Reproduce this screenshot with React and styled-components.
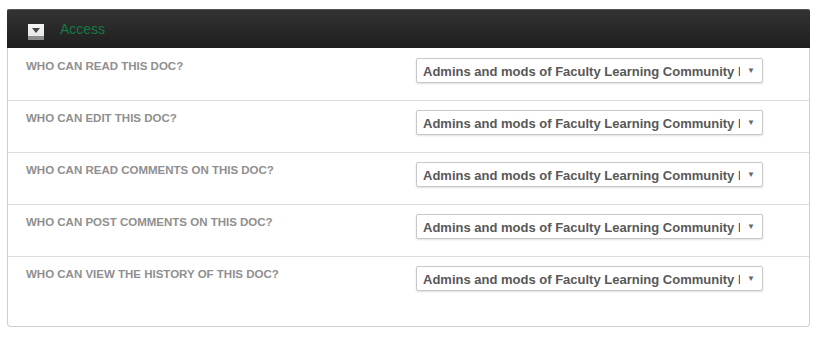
import React from "react";
import styled, { createGlobalStyle } from "styled-components";

const GlobalStyle = createGlobalStyle`
  body {
    margin: 0;
    background: #fff;
    font-family: "Liberation Sans", Arial, sans-serif;
  }
`;

const rules = [
  "Who can read this doc?",
  "Who can edit this doc?",
  "Who can read comments on this doc?",
  "Who can post comments on this doc?",
  "Who can view the history of this doc?",
];

const App = () => (
  <>
    <GlobalStyle />
    <Panel>
      <Header>
        <Toggle>
          <svg width="8" height="5" viewBox="0 0 8 5">
            <polygon points="0,0 8,0 4,5" fill="#444" />
          </svg>
        </Toggle>
        <Title>Access</Title>
      </Header>
      {rules.map((rule, i) => (
        <Row key={rule} last={i === rules.length - 1}>
          <Label>{rule}</Label>
          <Select>
            <SelectText>Admins and mods of Faculty Learning Community Members</SelectText>
            <Caret>▼</Caret>
          </Select>
        </Row>
      ))}
    </Panel>
  </>
);
export default App;

const Panel = styled.div`
  margin: 9px 0 0 7px;
  width: 803px;
  box-sizing: border-box;
  border: 1px solid #cfcfcf;
  border-top: none;
  border-radius: 0 0 4px 4px;
  padding-bottom: 35px;
`;

const Header = styled.div`
  display: flex;
  align-items: center;
  height: 38px;
  margin: 0 -1px;
  padding-left: 21px;
  background: linear-gradient(#333333, #1e1e1e);
  border-top: 1px solid #555;
  border-radius: 2px 2px 0 0;
`;

const Toggle = styled.div`
  width: 16px;
  height: 16px;
  box-sizing: border-box;
  display: flex;
  align-items: center;
  justify-content: center;
  padding-bottom: 3px;
  background: linear-gradient(#f4f4f4 0, #e8e8e8 12px, #8d8d8d 12px);
  margin-top: 6px;
`;

const Title = styled.span`
  margin-left: 16px;
  color: #177a45;
  font-size: 14px;
  margin-top: -1px;
`;

const Row = styled.div`
  display: flex;
  align-items: flex-start;
  padding: ${(p) => (p.last ? "9px 18px 0" : "9px 18px 17px")};
  border-bottom: ${(p) => (p.last ? "none" : "1px solid #dedede")};
  &:nth-child(2) {
    padding-top: 10px;
  }
`;

const Label = styled.div`
  width: 390px;
  flex: none;
  padding-top: 2px;
  color: #8f8f8f;
  font-size: 11.5px;
  font-weight: bold;
  text-transform: uppercase;
`;

const Select = styled.div`
  width: 347px;
  height: 25px;
  box-sizing: border-box;
  display: flex;
  align-items: center;
  border: 1px solid #c8c8c8;
  border-radius: 2px;
  box-shadow: 0 1px 2px rgba(0, 0, 0, 0.12);
  background: #fff;
`;

const SelectText = styled.div`
  flex: 1;
  overflow: hidden;
  white-space: nowrap;
  padding-left: 6px;
  color: #585858;
  font-size: 13px;
  font-weight: bold;
  margin-top: 2px;
`;

const Caret = styled.span`
  flex: none;
  width: 22px;
  text-align: center;
  color: #666;
  font-size: 8px;
`;
